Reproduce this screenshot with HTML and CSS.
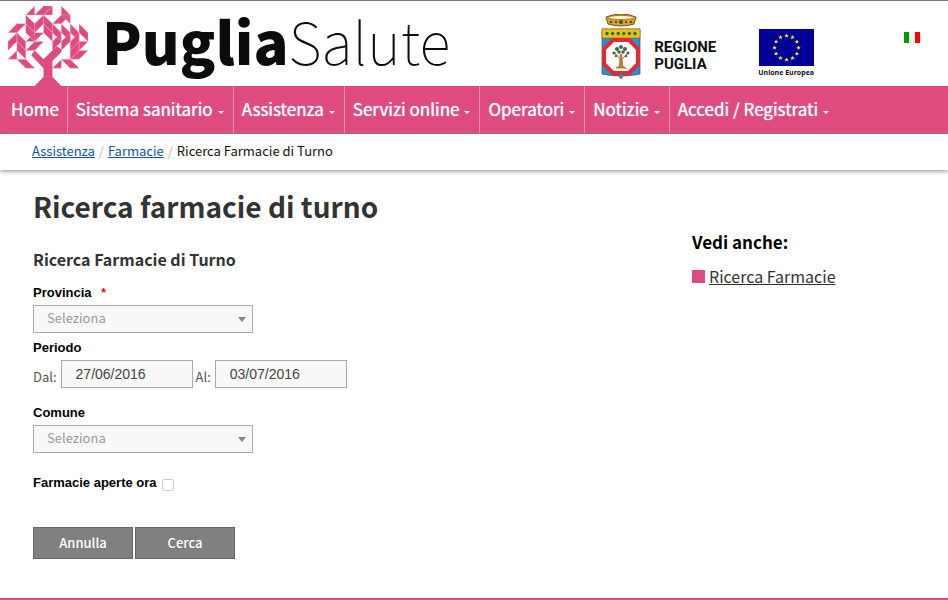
FILE: index.html
```
<!DOCTYPE html>
<html lang="it">
<head>
<meta charset="utf-8">
<meta name="viewport" content="width=device-width, initial-scale=1">
<title>PugliaSalute - Ricerca farmacie di turno</title>
<link rel="stylesheet" href="styles.css">
</head>
<body>
<header class="masthead">
  <a class="brand" href="#">
    <svg class="tree" viewBox="0 0 9 9" aria-hidden="true">
      <g class="leaves">
        <path d="M2 1L3 0V1ZM3 1L4 0H5L4 1ZM4 1L5 0V1ZM6 0L7 1V2L6 1ZM2 1L3 2V3L2 2ZM3 2L4 1V2L3 3ZM4 1L5 2V3L4 2ZM5 2L6 1H7L6 2Z"/>
        <path d="M0 3L1 2H2L1 3ZM2 2L3 3V4L2 3ZM1 3L2 4V5L1 4ZM0 4L1 3V4L0 5ZM2 4L3 3H4L3 4ZM4 2L5 3V4L4 3ZM5 2L6 3V4L5 3ZM5 4L6 3V4L5 5ZM6 2L7 3V4L6 3ZM7 2L8 3V4L7 3ZM8 2L9 3V4L8 3Z"/>
        <path d="M2 5L3 4H4L3 5ZM0 6L1 5V6ZM1 4L2 5V6L1 5ZM1 6H2L3 7H2ZM6 4L7 3V4L6 5ZM7 4L8 3V4L7 5ZM7 5L8 4V5L7 6ZM8 4H9L8 5ZM7 6L8 5H9L8 6ZM5 7L6 6V7ZM6 6H7L8 7H7Z"/>
      </g>
      <path class="trunk" d="M3 5L4 6L5.500 4.500L6 4.900V5.200L5 6.200V8L6 9H3L4 8V7L2.600 5.500Z"/>
    </svg>
    <span class="wordmark"><strong>Puglia</strong><span>Salute</span></span>
  </a>
  <div class="partners">
    <a class="region" href="#">
      <svg class="crest" viewBox="0 0 40 66" aria-hidden="true">
        <path d="M5 3Q20-3 35 3L33 10Q20 14 7 10Z" fill="#d9a520" stroke="#765113" stroke-width="1"/>
        <ellipse cx="20" cy="3.500" rx="13" ry="2" fill="#fff3c8" stroke="#8b601b" stroke-width=".7"/>
        <g fill="#2c5548"><circle cx="10" cy="8" r="1.300"/><circle cx="20" cy="8" r="2"/><circle cx="30" cy="8" r="1.300"/></g>
        <g fill="#b32b20"><circle cx="15" cy="8" r="1.200"/><circle cx="25" cy="8" r="1.200"/></g>
        <path d="M1 15H39V60Q29 62 22 62L20 65L18 62Q11 62 1 60Z" fill="#2f8ed8" stroke="#4b4b43" stroke-width=".7"/>
        <path d="M1 15H39V24H1Z" fill="#f2bd16" stroke="#75601f" stroke-width=".5"/>
        <g fill="#167849"><circle cx="6" cy="19.500" r="1.700"/><circle cx="11.600" cy="19.500" r="1.700"/><circle cx="17.200" cy="19.500" r="1.700"/><circle cx="22.800" cy="19.500" r="1.700"/><circle cx="28.400" cy="19.500" r="1.700"/><circle cx="34" cy="19.500" r="1.700"/></g>
        <path d="M12 26H28L37 35V50L28 59H12L3 50V35Z" fill="#fff" stroke="#e12b32" stroke-width="4"/>
        <path d="M19.300 40L18.500 52L15 54H25L21.500 52L20.700 40M20 46L14 39M20 46L27 39" fill="#b97b30" stroke="#b97b30" stroke-width="1"/>
        <g fill="#46664a"><circle cx="20" cy="33" r="2"/><circle cx="16" cy="35" r="2"/><circle cx="24" cy="35" r="2"/><circle cx="13" cy="39" r="1.600"/><circle cx="18" cy="38" r="1.800"/><circle cx="22" cy="38" r="1.800"/><circle cx="27" cy="39" r="1.600"/><circle cx="15" cy="42" r="1.300"/><circle cx="25" cy="42" r="1.300"/></g>
      </svg>
      <span>REGIONE<br>PUGLIA</span>
    </a>
    <a class="europe" href="#">
      <svg class="eu-flag" viewBox="0 0 55 37" aria-hidden="true">
        <path d="M0 0H55V37H0Z" fill="#000099"/>
        <g fill="#ffe51c">
          <path id="star" d="M27.500 4.500L28.200 5.900H29.700L28.500 7L29 8.600L27.500 7.700L26 8.600L26.500 7L25.300 5.900H26.800Z"/>
          <use href="#star" x="6" y="1.600"/><use href="#star" x="10.400" y="6"/><use href="#star" x="12" y="12"/><use href="#star" x="10.400" y="18"/><use href="#star" x="6" y="22.400"/><use href="#star" y="24"/><use href="#star" x="-6" y="22.400"/><use href="#star" x="-10.400" y="18"/><use href="#star" x="-12" y="12"/><use href="#star" x="-10.400" y="6"/><use href="#star" x="-6" y="1.600"/>
        </g>
      </svg>
      <span>Unione Europea</span>
    </a>
    <a class="language" href="#" aria-label="Italiano"></a>
  </div>
</header>

<nav class="menu">
  <a href="#">Home</a>
  <a class="has-menu" href="#">Sistema sanitario</a>
  <a class="has-menu" href="#">Assistenza</a>
  <a class="has-menu" href="#">Servizi online</a>
  <a class="has-menu" href="#">Operatori</a>
  <a class="has-menu" href="#">Notizie</a>
  <a class="has-menu" href="#">Accedi / Registrati</a>
</nav>

<nav class="breadcrumb">
  <a href="#">Assistenza</a><i>/</i><a href="#">Farmacie</a><i>/</i><span>Ricerca Farmacie di Turno</span>
</nav>

<main class="content">
  <section class="search">
    <h1>Ricerca farmacie di turno</h1>
    <form>
      <h2>Ricerca Farmacie di Turno</h2>
      <div class="field">
        <label class="caption" for="provincia">Provincia <span class="required">*</span></label>
        <div class="select"><select id="provincia"><option>Seleziona</option></select></div>
      </div>
      <fieldset class="field period">
        <legend class="caption">Periodo</legend>
        <div class="dates">
          <label for="dal">Dal:</label><input id="dal" type="text" value="27/06/2016">
          <label for="al">Al:</label><input id="al" type="text" value="03/07/2016">
        </div>
      </fieldset>
      <div class="field">
        <label class="caption" for="comune">Comune</label>
        <div class="select"><select id="comune"><option>Seleziona</option></select></div>
      </div>
      <div class="check">
        <label class="caption" for="aperte">Farmacie aperte ora</label><input id="aperte" type="checkbox">
      </div>
      <div class="actions">
        <button type="reset">Annulla</button>
        <button type="submit">Cerca</button>
      </div>
    </form>
  </section>
  <aside class="related">
    <h2>Vedi anche:</h2>
    <ul><li><a href="#">Ricerca Farmacie</a></li></ul>
  </aside>
</main>
<footer class="footer"></footer>
</body>
</html>
```
FILE: styles.css
```
* {
  box-sizing: border-box;
}

body {
  margin: 0;
  min-height: 100vh;
  display: flex;
  flex-direction: column;
  background: #fff;
  color: #333;
  font-family: "Noto Sans CJK JP", "Open Sans", sans-serif;
  font-size: 13px;
  line-height: 20px;
}

h1, h2, ul {
  margin: 0;
  padding: 0;
}

.masthead {
  display: flex;
  justify-content: space-between;
  height: 86px;
  border-top: 1px solid #777;
}

.brand {
  display: flex;
  align-items: flex-end;
  gap: 14px;
  padding-left: 8px;
  color: #0a0d0c;
  text-decoration: none;
}

.tree {
  width: 80px;
  height: 80px;
}

.leaves {
  fill: #df4b7e;
  stroke: #f3b9ce;
  stroke-width: .04;
}

.trunk {
  fill: #df4b7e;
}

.wordmark {
  padding-bottom: 8px;
  font-size: 58px;
  line-height: 76px;
}

.wordmark strong {
  font-weight: 900;
}

.wordmark span {
  font-weight: 100;
}

.partners {
  display: flex;
  align-items: flex-start;
  padding-right: 28px;
}

.partners a {
  color: #111;
  text-decoration: none;
}

.region {
  display: flex;
  gap: 13px;
  padding-top: 13px;
  font: 700 15px/17px Roboto, sans-serif;
}

.region span {
  padding-top: 25px;
}

.crest {
  width: 40px;
  height: 66px;
}

.europe {
  display: flex;
  flex-direction: column;
  align-items: center;
  margin-left: 42px;
  padding-top: 28px;
  font: 700 7px/14px "Open Sans", sans-serif;
}

.eu-flag {
  width: 55px;
  height: 37px;
}

.language {
  width: 16px;
  height: 11px;
  margin: 31px 0 0 90px;
  background: linear-gradient(90deg, #090 5px, #f4f4f4 5px 11px, #f00 11px);
}

.menu {
  display: flex;
  height: 48px;
  padding: 0 3px 1px;
  background: #df4b7e;
}

.menu a {
  display: flex;
  align-items: center;
  padding: 0 8px 2px;
  border-right: 1px solid #e991b1;
  color: #fff;
  font-size: 17px;
  font-weight: 400;
  text-decoration: none;
  text-shadow: 0 0 1px #fff;
  white-space: nowrap;
}

.menu a:last-child {
  border-right: 0;
}

.has-menu::after {
  content: "";
  margin: 7px 1px 0 5px;
  border: 3px solid transparent;
  border-top-color: #fff;
  border-bottom: 0;
}

.breadcrumb {
  height: 36px;
  padding: 0 32px;
  color: #111;
  line-height: 34px;
  box-shadow: 0 1px 5px #888;
}

.breadcrumb a {
  color: #0a5699;
}

.breadcrumb i {
  padding: 0 4px;
  color: #bbb;
  font-style: normal;
}

.content {
  flex: 1;
  display: grid;
  grid-template-columns: 1fr 224px;
  padding: 16px 32px 0 33px;
}

h1 {
  font-size: 28px;
  line-height: 40px;
}

.search h2 {
  margin-top: 22px;
  font-size: 16px;
  line-height: 22px;
}

.caption {
  display: block;
  padding: 0;
  color: #000;
  font: 700 13px/16px "Liberation Sans", sans-serif;
}

.required {
  margin-left: 6px;
  color: #f00;
  font-size: 12px;
}

.field {
  margin: 15px 0 0;
  padding: 0;
  border: 0;
}

.period {
  margin: 7px 0 17px;
}

.select {
  position: relative;
  width: 220px;
  margin-top: 4px;
}

.select::after {
  content: "";
  position: absolute;
  top: 12px;
  right: 7px;
  border: 4px solid transparent;
  border-top: 5px solid #888;
  border-bottom: 0;
  pointer-events: none;
}

select, input[type="text"] {
  display: block;
  height: 28px;
  margin: 0;
  padding: 0 13px;
  border: 1px solid #aaa;
  border-radius: 0;
  background: #f8f8f8;
  color: #999;
}

select {
  width: 100%;
  padding-bottom: 2px;
  appearance: none;
  font: 13px/20px "Noto Sans CJK JP", sans-serif;
}

input[type="text"] {
  width: 132px;
  padding-left: 14px;
  color: #444;
  font: 14px/20px "Liberation Sans", sans-serif;
}

.dates {
  display: flex;
  margin-top: 4px;
}

.dates label {
  padding-top: 7px;
  color: #555;
}

.dates input[type="text"] {
  margin: 0 3px 0 4px;
}

.period + .field {
  margin-top: 0;
}

.check {
  display: flex;
  gap: 5px;
  margin-top: 22px;
}

.check input {
  appearance: none;
  width: 12px;
  height: 12px;
  margin: 4px 0 0;
  border: 1px solid #ccc;
  border-radius: 2px;
}

.actions {
  display: flex;
  gap: 2px;
  margin-top: 36px;
}

button {
  width: 100px;
  height: 32px;
  padding: 0;
  border: 1px solid #666;
  background: #808080;
  color: #fff;
  font: 500 13px/20px "Noto Sans CJK JP", sans-serif;
}

.related {
  padding-top: 44px;
}

.related h2 {
  color: #000;
  font-size: 17px;
  line-height: 24px;
}

.related li {
  display: flex;
  align-items: center;
  gap: 4px;
  margin-top: 10px;
  font-size: 16px;
  line-height: 24px;
}

.related li::before {
  content: "";
  width: 13px;
  height: 13px;
  background: #df4b7e;
}

.related a {
  color: #333;
}

.footer {
  border-top: 2px solid #df4b7e;
}
```
